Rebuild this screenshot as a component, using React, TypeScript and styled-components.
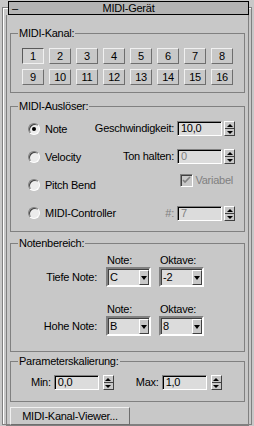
import React from "react";
import styled, { createGlobalStyle } from "styled-components";

const GlobalStyle = createGlobalStyle`
  html, body {
    margin: 0;
    padding: 0;
    background: #c8c8c8;
  }
  body {
    font-family: "Liberation Sans", Arial, sans-serif;
    font-size: 11px;
    letter-spacing: -0.25px;
    color: #000;
  }
`;

const Page = styled.div`
  width: 254px;
  height: 426px;
  box-sizing: border-box;
  padding: 7px 0 0 2px;
  background: #c8c8c8;
  overflow: hidden;
`;

const Frame = styled.div`
  width: 250px;
  height: 418px;
  box-sizing: border-box;
  border: 1px solid #808080;
  box-shadow: inset 1px 1px 0 #fff;
  display: flex;
  flex-direction: column;
`;

const Header = styled.div`
  margin: -7px 2px 0 5px;
  height: 14px;
  box-sizing: border-box;
  border: 1px solid #000;
  background: #b4b4b4;
  display: grid;
  grid-template-columns: 1fr auto 1fr;
  align-items: center;
  line-height: 12px;
`;

const Collapse = styled.span`
  padding-left: 3px;
`;

const Body = styled.div`
  flex: 1;
  margin: 0 2px 1px 3px;
  border: 1px solid #808080;
  border-top: none;
  padding: 9px 0 0 3px;
  display: flex;
  flex-direction: column;
  align-items: flex-start;
`;

const Group = styled.div<{ $top: number; $height: number }>`
  position: relative;
  width: 235px;
  height: ${(p) => p.$height}px;
  margin-top: ${(p) => p.$top}px;
  box-sizing: border-box;
  border: 1px solid #808080;
`;

const Legend = styled.span`
  position: absolute;
  top: -7px;
  left: 7px;
  padding: 0 1px;
  background: #c8c8c8;
  line-height: 13px;
  white-space: nowrap;
`;

/* MIDI-Kanal */
const ChannelGrid = styled.div`
  display: grid;
  grid-template-columns: repeat(8, 22px);
  grid-auto-rows: 16px;
  gap: 5px;
  padding: 14px 0 0 11px;
`;

const ChanButton = styled.div<{ $pressed?: boolean }>`
  box-sizing: border-box;
  border: 1px solid;
  border-color: ${(p) =>
    p.$pressed ? "#5a5a5a #f0f0f0 #f0f0f0 #5a5a5a" : "#f0f0f0 #6e6e6e #6e6e6e #f0f0f0"};
  background: ${(p) => (p.$pressed ? "#d0d0d0" : "#c8c8c8")};
  display: flex;
  align-items: center;
  justify-content: center;
  line-height: 14px;
`;

/* MIDI-Auslöser: radio list and value column share one cell */
const TriggerBody = styled.div`
  display: grid;
  grid-template-columns: 1fr;
  padding: 14px 9px 0 17px;

  & > * {
    grid-area: 1 / 1;
  }
`;

const RadioList = styled.div`
  justify-self: start;
  display: flex;
  flex-direction: column;
  gap: 12px;
`;

const RadioItem = styled.label`
  display: flex;
  align-items: center;
  gap: 5px;
  height: 16px;
  white-space: nowrap;
`;

const RadioDot = styled.span<{ $checked?: boolean }>`
  width: 12px;
  height: 12px;
  box-sizing: border-box;
  border-radius: 50%;
  border: 1px solid;
  border-color: #808080 #fff #fff #808080;
  background: #ececec;
  box-shadow: inset 1px 1px 0 #404040;
  display: flex;
  align-items: center;
  justify-content: center;

  &::after {
    content: "";
    width: 4px;
    height: 4px;
    border-radius: 50%;
    background: ${(p) => (p.$checked ? "#000" : "transparent")};
  }
`;

const ControlColumn = styled.div`
  justify-self: end;
  display: flex;
  flex-direction: column;
  align-items: flex-end;
`;

const ControlRow = styled.div<{ $top?: number }>`
  display: flex;
  align-items: center;
  gap: 2px;
  height: 15px;
  margin-top: ${(p) => p.$top || 0}px;
  white-space: nowrap;
`;

const Label = styled.span<{ $disabled?: boolean }>`
  margin-right: 1px;
  line-height: 13px;
  white-space: nowrap;
  color: ${(p) => (p.$disabled ? "#808080" : "#000")};
`;

const Field = styled.div<{ $disabled?: boolean }>`
  width: 45px;
  height: 15px;
  box-sizing: border-box;
  border: 1px solid;
  border-color: #808080 #fff #fff #808080;
  box-shadow: inset 1px 1px 0 #000;
  background: #dcdcdc;
  padding-left: 3px;
  line-height: 13px;
  color: ${(p) => (p.$disabled ? "#808080" : "#000")};
`;

const Spinner = styled.div`
  width: 11px;
  height: 15px;
  box-sizing: border-box;
  border: 1px solid;
  border-color: #fff #404040 #404040 #fff;
  background: #c8c8c8;
  display: flex;
  flex-direction: column;
`;

const SpinHalf = styled.div<{ $down?: boolean }>`
  flex: 1;
  display: flex;
  align-items: center;
  justify-content: center;
  border-top: ${(p) => (p.$down ? "1px solid #404040" : "none")};

  &::after {
    content: "";
    width: 0;
    height: 0;
    border-left: 3px solid transparent;
    border-right: 3px solid transparent;
    ${(p) => (p.$down ? "border-top: 3px solid #000;" : "border-bottom: 3px solid #000;")}
  }
`;

const CheckRow = styled(ControlRow)`
  height: 14px;
  margin-right: 2px;
  color: #808080;
`;

const CheckBox = styled.span`
  width: 13px;
  height: 13px;
  flex: none;
  box-sizing: border-box;
  border: 1px solid;
  border-color: #808080 #fff #fff #808080;
  box-shadow: inset 1px 1px 0 #404040;
  background: #c8c8c8;
  display: flex;
  align-items: center;
  justify-content: center;
`;

/* Notenbereich */
const NoteGrid = styled.div`
  display: grid;
  grid-template-columns: 87px 45px 45px;
  grid-template-rows: 14px 20px 29px 20px;
  column-gap: 8px;
  padding-top: 9px;
`;

const ColHead = styled.span`
  align-self: end;
  padding-left: 1px;
  line-height: 13px;
`;

const RowLabel = styled.span`
  justify-self: end;
  align-self: center;
  padding-right: 1px;
  line-height: 13px;
  white-space: nowrap;
`;

const Dropdown = styled.div`
  box-sizing: border-box;
  height: 20px;
  border: 2px solid;
  border-color: #808080 #fff #fff #808080;
  box-shadow: inset 1px 1px 0 #404040;
  background: #dcdcdc;
  display: flex;
  align-items: center;
  justify-content: space-between;
  padding-left: 2px;
  line-height: 13px;
`;

const DropArrow = styled.span`
  width: 10px;
  height: 15px;
  margin-top: 1px;
  box-sizing: border-box;
  border: 1px solid;
  border-color: #fff #404040 #404040 #fff;
  background: #c8c8c8;
  display: flex;
  align-items: center;
  justify-content: center;

  &::after {
    content: "";
    width: 0;
    height: 0;
    border-left: 3px solid transparent;
    border-right: 3px solid transparent;
    border-top: 4px solid #000;
  }
`;

/* Parameterskalierung */
const ScaleRow = styled.div`
  display: flex;
  align-items: center;
  padding: 13px 0 0 20px;
`;

const ScaleLabel = styled.span<{ $gap?: number }>`
  margin-left: ${(p) => p.$gap || 0}px;
  margin-right: 3px;
  line-height: 13px;
`;

const ScaleField = styled(Field)`
  margin-right: 4px;
`;

const ViewerButton = styled.div`
  margin-top: 5px;
  width: 120px;
  height: 18px;
  box-sizing: border-box;
  border: 1px solid;
  border-color: #f0f0f0 #6e6e6e #6e6e6e #f0f0f0;
  background: #c8c8c8;
  display: flex;
  align-items: center;
  justify-content: center;
  line-height: 14px;
`;

const SpinBox = () => (
  <Spinner>
    <SpinHalf />
    <SpinHalf $down />
  </Spinner>
);

const Select = ({ value }: { value: string }) => (
  <Dropdown>
    <span>{value}</span>
    <DropArrow />
  </Dropdown>
);

const channels = Array.from({ length: 16 }, (_, i) => i + 1);
const triggers = ["Note", "Velocity", "Pitch Bend", "MIDI-Controller"];

export default function App() {
  return (
    <Page>
      <GlobalStyle />
      <Frame>
        <Header>
          <Collapse>–</Collapse>
          <span>MIDI-Gerät</span>
          <span />
        </Header>
        <Body>
          <Group $top={9} $height={60}>
            <Legend>MIDI-Kanal:</Legend>
            <ChannelGrid>
              {channels.map((n) => (
                <ChanButton key={n} $pressed={n === 1}>
                  {n}
                </ChanButton>
              ))}
            </ChannelGrid>
          </Group>

          <Group $top={13} $height={126}>
            <Legend>MIDI-Auslöser:</Legend>
            <TriggerBody>
              <RadioList>
                {triggers.map((t, i) => (
                  <RadioItem key={t}>
                    <RadioDot $checked={i === 0} />
                    {t}
                  </RadioItem>
                ))}
              </RadioList>
              <ControlColumn>
                <ControlRow>
                  <Label>Geschwindigkeit:</Label>
                  <Field>10,0</Field>
                  <SpinBox />
                </ControlRow>
                <ControlRow $top={13}>
                  <Label>Ton halten:</Label>
                  <Field $disabled>0</Field>
                  <SpinBox />
                </ControlRow>
                <CheckRow $top={9}>
                  <CheckBox>
                    <svg width="9" height="9" viewBox="0 0 9 9">
                      <path d="M1 4 L3 6 L8 1" stroke="#808080" strokeWidth="1.6" fill="none" />
                    </svg>
                  </CheckBox>
                  Variabel
                </CheckRow>
                <ControlRow $top={19}>
                  <Label $disabled>#:</Label>
                  <Field $disabled>7</Field>
                  <SpinBox />
                </ControlRow>
              </ControlColumn>
            </TriggerBody>
          </Group>

          <Group $top={11} $height={109}>
            <Legend>Notenbereich:</Legend>
            <NoteGrid>
              <span />
              <ColHead>Note:</ColHead>
              <ColHead>Oktave:</ColHead>
              <RowLabel>Tiefe Note:</RowLabel>
              <Select value="C" />
              <Select value="-2" />
              <span />
              <ColHead>Note:</ColHead>
              <ColHead>Oktave:</ColHead>
              <RowLabel>Hohe Note:</RowLabel>
              <Select value="B" />
              <Select value="8" />
            </NoteGrid>
          </Group>

          <Group $top={9} $height={41}>
            <Legend>Parameterskalierung:</Legend>
            <ScaleRow>
              <ScaleLabel>Min:</ScaleLabel>
              <ScaleField>0,0</ScaleField>
              <SpinBox />
              <ScaleLabel $gap={22}>Max:</ScaleLabel>
              <ScaleField>1,0</ScaleField>
              <SpinBox />
            </ScaleRow>
          </Group>

          <ViewerButton>MIDI-Kanal-Viewer...</ViewerButton>
        </Body>
      </Frame>
    </Page>
  );
}
